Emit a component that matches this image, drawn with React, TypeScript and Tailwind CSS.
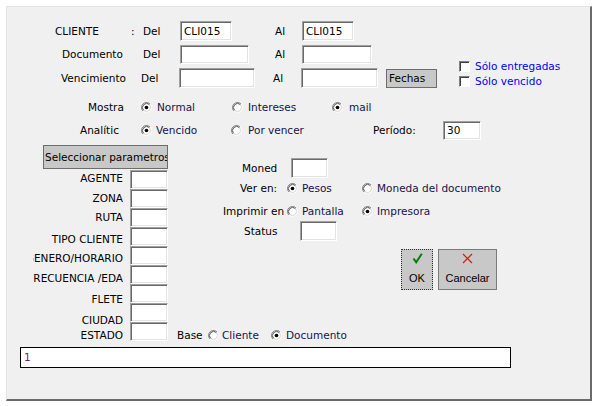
import type { ReactNode } from 'react';

const font = "font-['DejaVu_Sans',sans-serif] text-[10.5px] leading-[13px] text-black";

function Box({ cls, children }: { cls: string; children?: ReactNode }) {
  return <div className={`shrink-0 whitespace-nowrap ${cls}`}>{children}</div>;
}

function Field({ cls, value }: { cls: string; value?: string }) {
  return (
    <div className={`shrink-0 flex items-center pl-[3px] bg-white border border-t-[#a0a0a0] border-l-[#a0a0a0] border-r-white border-b-white shadow-[inset_1px_1px_0_#696969,inset_-1px_-1px_0_#e3e3e3] ${cls}`}>
      {value}
    </div>
  );
}

function Radio({ on }: { on?: boolean }) {
  return (
    <svg width="11" height="11" viewBox="0 0 12 12" className="shrink-0">
      <circle cx="6" cy="6" r="5" fill="#fff" />
      <path d="M2.11 9.89 A5.5 5.5 0 0 1 9.89 2.11" fill="none" stroke="#808080" strokeWidth="1" />
      <path d="M2.82 9.18 A4.5 4.5 0 0 1 9.18 2.82" fill="none" stroke="#404040" strokeWidth="1" />
      <path d="M9.89 2.11 A5.5 5.5 0 0 1 2.11 9.89" fill="none" stroke="#ffffff" strokeWidth="1" />
      <path d="M9.18 2.82 A4.5 4.5 0 0 1 2.82 9.18" fill="none" stroke="#d4d0c8" strokeWidth="1" />
      {on && <circle cx="6" cy="6" r="2" fill="#000" />}
    </svg>
  );
}

function Check() {
  return (
    <div className="shrink-0 w-[11px] h-[11px] bg-white border border-t-[#808080] border-l-[#808080] border-r-white border-b-white shadow-[inset_1px_1px_0_#404040]" />
  );
}

function ParamLabel({ cls, text }: { cls: string; text: string }) {
  return (
    <div className={`h-[13px] w-[90px] flex justify-end overflow-hidden whitespace-nowrap ${cls}`}>
      <span className="shrink-0">{text}</span>
    </div>
  );
}

const paramLabels = [
  { cls: 'mt-[3px]', text: 'AGENTE' },
  { cls: 'mt-[7px]', text: 'ZONA' },
  { cls: 'mt-[6px]', text: 'RUTA' },
  { cls: 'mt-[9px]', text: 'TIPO CLIENTE' },
  { cls: 'mt-[6px]', text: 'GENERO/HORARIO' },
  { cls: 'mt-[7px]', text: 'FRECUENCIA /EDA' },
  { cls: 'mt-[8px]', text: 'FLETE' },
  { cls: 'mt-[8px]', text: 'CIUDAD' },
  { cls: 'mt-[2px]', text: 'ESTADO' },
];

const radioText = 'text-[#14144a]';

export default function App() {
  return (
    <div className="w-[598px] h-[406px] bg-white overflow-hidden">
      <div className={`ml-[6px] mt-[6px] w-[586px] h-[395px] bg-[#f0f0f0] border-t border-l border-[#e3e3e3] border-r-2 border-b-2 border-r-[#6b6b6b] border-b-[#6b6b6b] ${font}`}>
        <div className="pt-[14px]">
          {/* CLIENTE */}
          <div className="flex items-center h-[20px]">
            <Box cls="w-[48px]" />
            <Box cls="w-[76px]">CLIENTE</Box>
            <Box cls="w-[12px]">:</Box>
            <Box cls="w-[37px]">Del</Box>
            <Field cls="w-[52px] h-[20px]" value="CLI015" />
            <Box cls="w-[43px]" />
            <Box cls="w-[27px]">Al</Box>
            <Field cls="w-[52px] h-[20px]" value="CLI015" />
          </div>

          <div className="flex mt-[4px]">
            <div className="w-[430px] shrink-0">
              {/* Documento */}
              <div className="flex items-center h-[19px]">
                <Box cls="w-[55px]" />
                <Box cls="w-[81px]">Documento</Box>
                <Box cls="w-[37px]">Del</Box>
                <Field cls="w-[69px] h-[19px]" />
                <Box cls="w-[26px]" />
                <Box cls="w-[27px]">Al</Box>
                <Field cls="w-[70px] h-[19px]" />
              </div>
              {/* Vencimiento */}
              <div className="flex items-center h-[20px] mt-[4px]">
                <Box cls="w-[54px]" />
                <Box cls="w-[80px]">Vencimiento</Box>
                <Box cls="w-[38px]">Del</Box>
                <Field cls="w-[76px] h-[20px]" />
                <Box cls="w-[18px]" />
                <Box cls="w-[28px]">Al</Box>
                <Field cls="w-[77px] h-[20px]" />
                <Box cls="w-[8px]" />
                <div className="shrink-0 w-[51px] h-[19px] flex items-center pl-[2px] bg-[#c8c8c8] border border-[#6d6d6d]">
                  Fechas
                </div>
              </div>
            </div>
            <Box cls="w-[22px]" />
            <div className="mt-[14px] text-[#0000ff]">
              <div className="flex items-center h-[15px]">
                <Check />
                <span className="ml-[5px] whitespace-nowrap">Sólo entregadas</span>
              </div>
              <div className="flex items-center h-[15px]">
                <Check />
                <span className="ml-[5px] whitespace-nowrap">Sólo vencido</span>
              </div>
            </div>
          </div>

          {/* Mostra */}
          <div className="flex items-center h-[16px] mt-[10px]">
            <Box cls="w-[81px]" />
            <Box cls="w-[53px]">Mostra</Box>
            <Radio on />
            <Box cls={`w-[80px] pl-[5px] ${radioText}`}>Normal</Box>
            <Radio />
            <Box cls={`w-[89px] pl-[5px] ${radioText}`}>Intereses</Box>
            <Radio on />
            <Box cls={`pl-[6px] ${radioText}`}>mail</Box>
          </div>

          {/* Analitic */}
          <div className="flex items-center h-[19px] mt-[6px]">
            <Box cls="w-[73px]" />
            <Box cls="w-[61px]">Analític</Box>
            <Radio on />
            <Box cls={`w-[79px] pl-[4px] ${radioText}`}>Vencido</Box>
            <Radio />
            <Box cls={`w-[131px] pl-[6px] ${radioText}`}>Por vencer</Box>
            <Box cls="w-[70px]">Período:</Box>
            <Field cls="w-[38px] h-[19px]" value="30" />
          </div>

          {/* middle */}
          <div className="flex mt-[5px]">
            <Box cls="w-[26px]" />
            <div className="w-[135px] shrink-0">
              <div className="ml-[10px] w-[125px] h-[24px] flex items-center pl-[1px] overflow-hidden whitespace-nowrap bg-[#c8c8c8] border border-[#6d6d6d]">
                Seleccionar parametros
              </div>
              <div className="flex">
                <div className="w-[90px] shrink-0">
                  {paramLabels.map((p) => (
                    <ParamLabel key={p.text} cls={p.cls} text={p.text} />
                  ))}
                </div>
                <Box cls="w-[7px]" />
                <div className="w-[38px] shrink-0 pt-[1px]">
                  {paramLabels.map((p) => (
                    <Field key={p.text} cls="w-[38px] h-[19px]" />
                  ))}
                </div>
              </div>
            </div>
            <Box cls="w-[9px]" />
            <div className="flex-1">
              <div className="flex items-center h-[20px] mt-[13px]">
                <Box cls="w-[65px]" />
                <Box cls="w-[49px]">Moned</Box>
                <Field cls="w-[37px] h-[20px]" />
              </div>
              <div className="flex items-center h-[16px] mt-[2px]">
                <Box cls="w-[63px]" />
                <Box cls="w-[47px]">Ver en:</Box>
                <Radio on />
                <Box cls={`w-[64px] pl-[4px] ${radioText}`}>Pesos</Box>
                <Radio />
                <Box cls={`pl-[4px] ${radioText}`}>Moneda del documento</Box>
              </div>
              <div className="flex items-center h-[16px] mt-[7px]">
                <Box cls="w-[46px]" />
                <Box cls="w-[64px]">Imprimir en</Box>
                <Radio />
                <Box cls={`w-[64px] pl-[4px] ${radioText}`}>Pantalla</Box>
                <Radio on />
                <Box cls={`pl-[4px] ${radioText}`}>Impresora</Box>
              </div>
              <div className="flex items-center h-[20px] mt-[2px]">
                <Box cls="w-[67px]" />
                <Box cls="w-[56px]">Status</Box>
                <Field cls="w-[37px] h-[20px]" />
              </div>
              <div className="flex h-[41px] mt-[8px] font-['Liberation_Sans',sans-serif] text-[11px]">
                <Box cls="w-[224px]" />
                <div className="shrink-0 w-[32px] h-[41px] bg-[#c8c8c8] border border-dotted border-[#303030] flex flex-col items-center pt-[3px]">
                  <svg width="11" height="11" viewBox="0 0 11 11">
                    <path d="M1.5 5.5 L4.2 9.2 L9.8 0.8" fill="none" stroke="#008000" strokeWidth="2" />
                  </svg>
                  <span className="mt-[8px] leading-[12px]">OK</span>
                </div>
                <Box cls="w-[5px]" />
                <div className="shrink-0 w-[59px] h-[41px] bg-[#c8c8c8] border border-[#7a7a7a] flex flex-col items-center pt-[3px]">
                  <svg width="11" height="11" viewBox="0 0 11 11">
                    <path d="M1 1 L10 10 M10 1 L1 10" fill="none" stroke="#e81010" strokeWidth="1.2" />
                  </svg>
                  <span className="mt-[8px] leading-[12px]">Cancelar</span>
                </div>
              </div>
              <div className="flex items-center h-[16px] mt-[37px]">
                <Box cls="w-[31px]">Base</Box>
                <Radio />
                <Box cls={`w-[52px] pl-[3px] ${radioText}`}>Cliente</Box>
                <Radio on />
                <Box cls={`pl-[4px] ${radioText}`}>Documento</Box>
              </div>
            </div>
          </div>

          <div className="ml-[13px] mt-[4px] w-[491px] h-[21px] bg-white border border-black flex items-center pl-[3px] text-[#6b1f7a]">
            1
          </div>
        </div>
      </div>
    </div>
  );
}
